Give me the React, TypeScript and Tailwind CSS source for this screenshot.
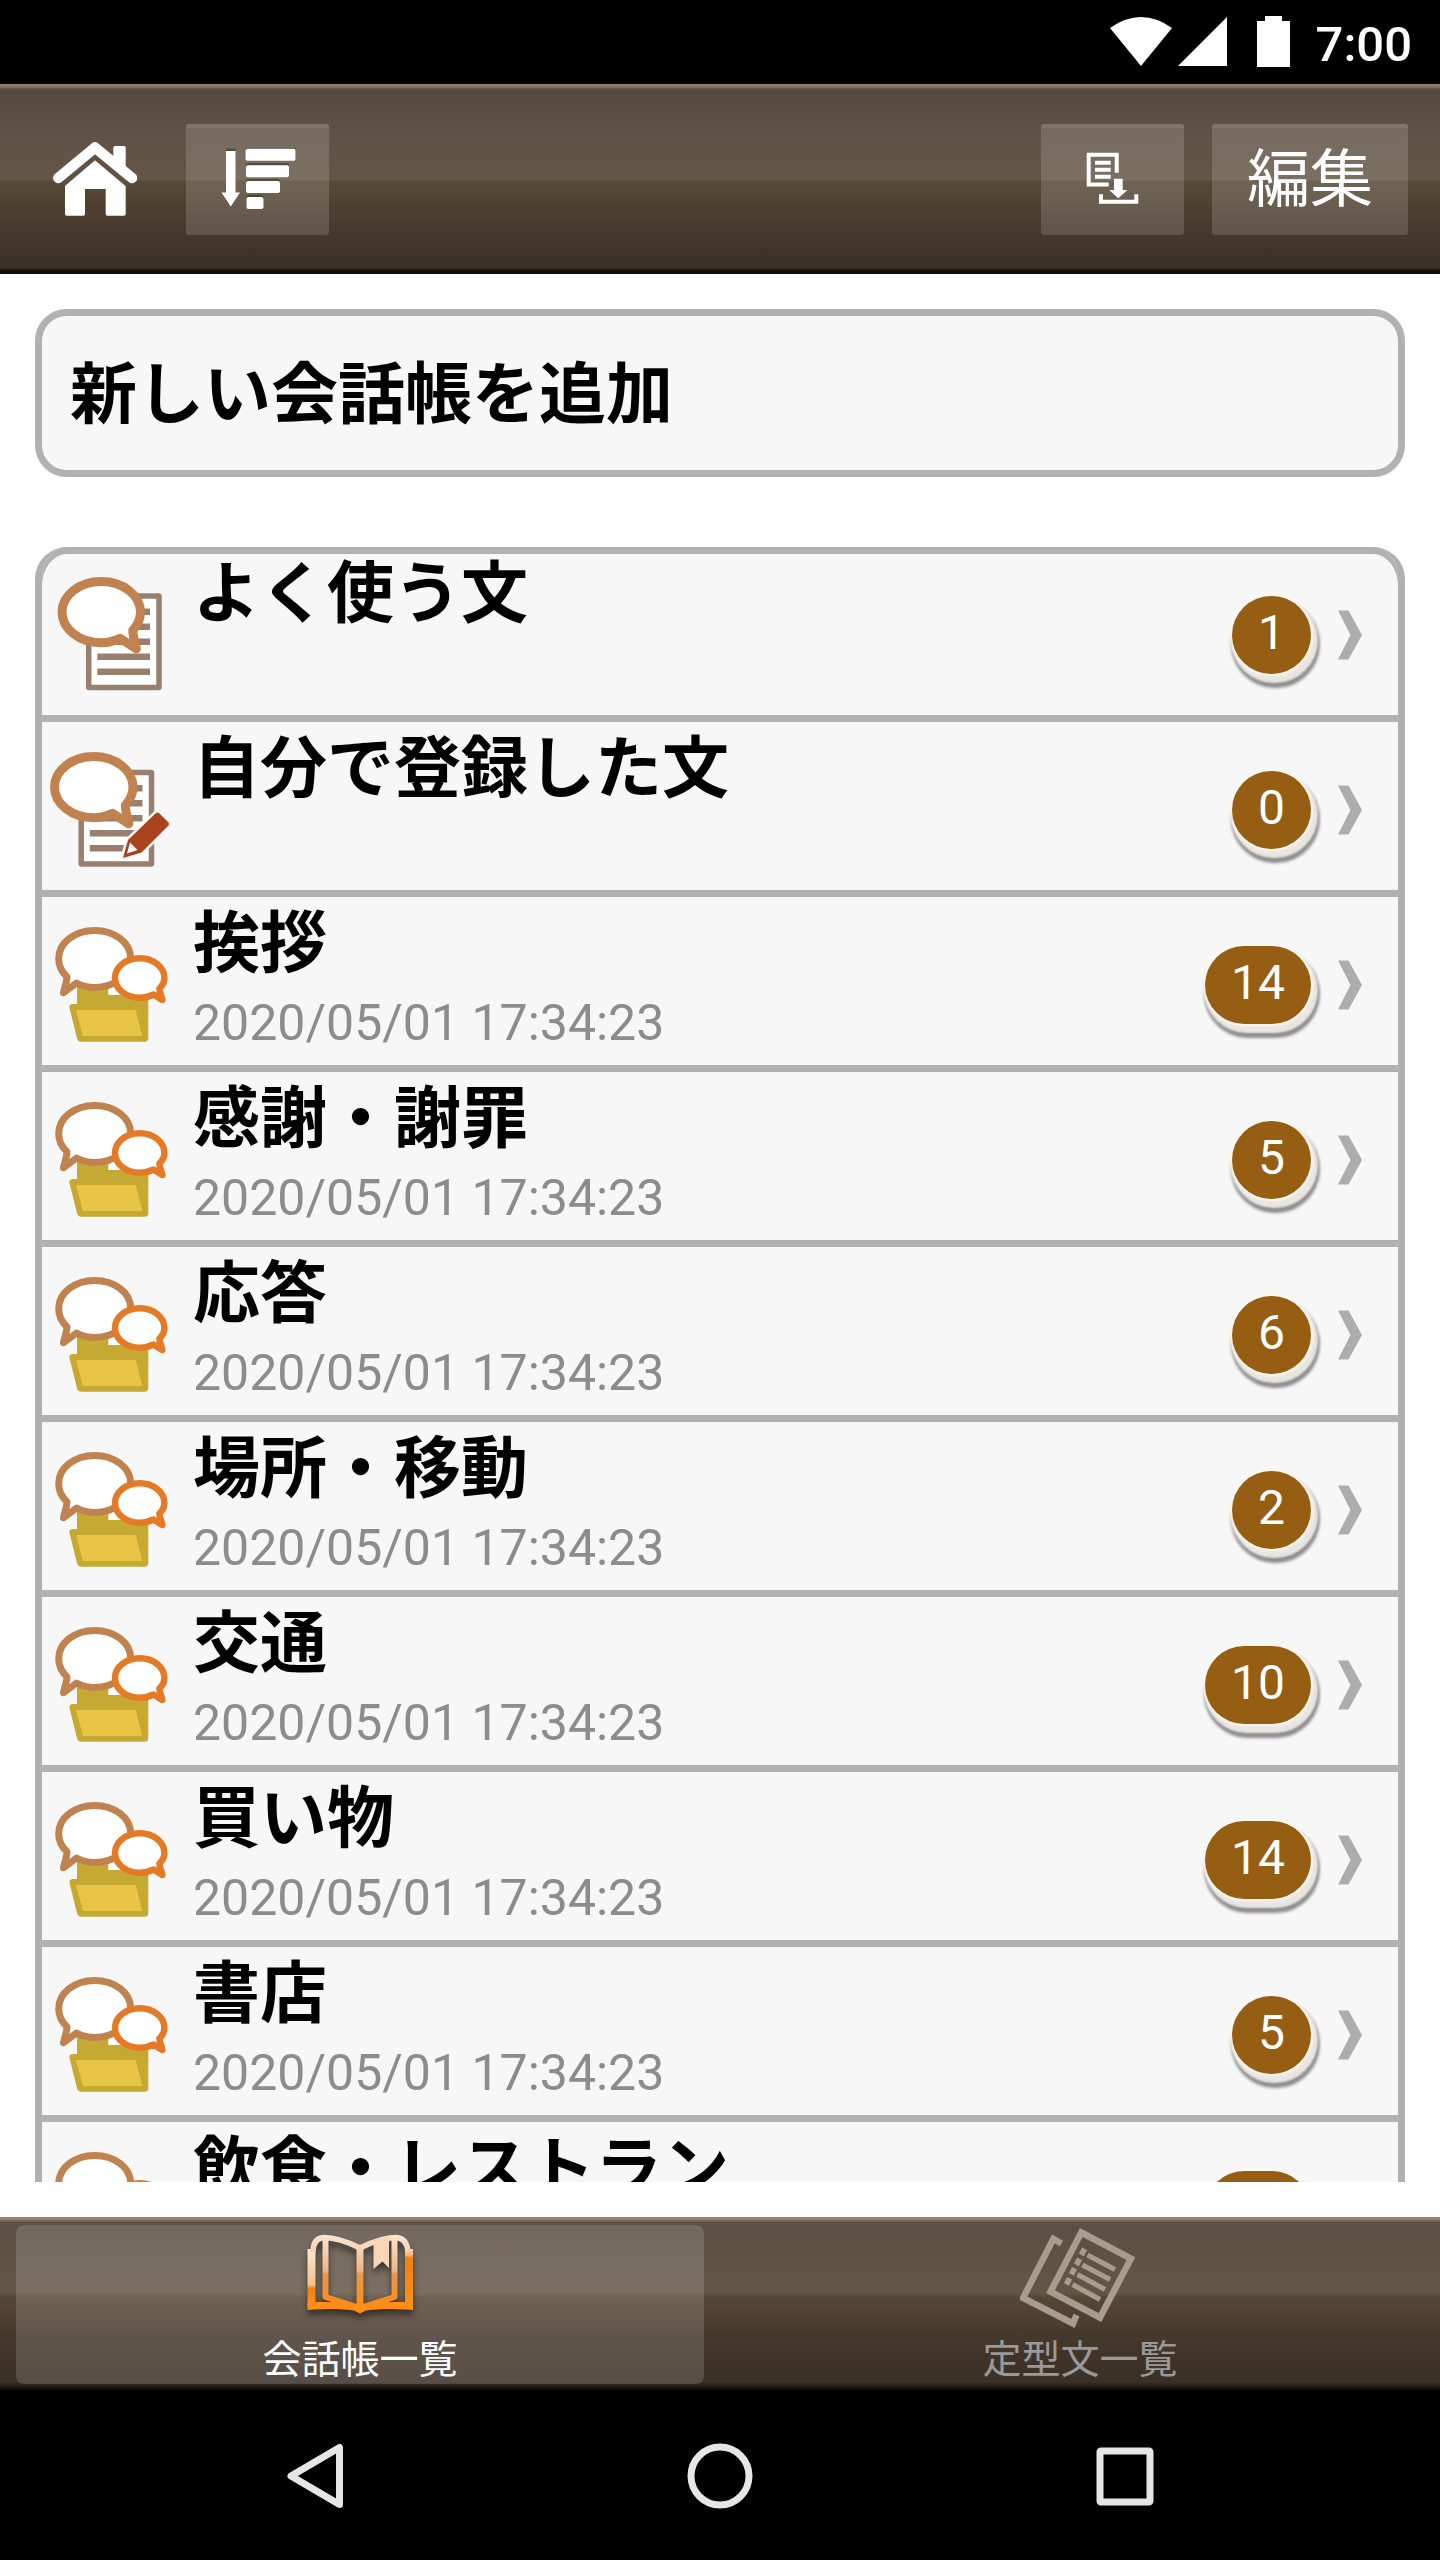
import type { ReactNode } from "react";

type NoteKind = "frequent" | "own" | "folder";

type Note = {
  title: string;
  date?: string;
  count: number;
  kind: NoteKind;
};

const notes: Note[] = [
  { title: "よく使う文", count: 1, kind: "frequent" },
  { title: "自分で登録した文", count: 0, kind: "own" },
  { title: "挨拶", date: "2020/05/01 17:34:23", count: 14, kind: "folder" },
  { title: "感謝・謝罪", date: "2020/05/01 17:34:23", count: 5, kind: "folder" },
  { title: "応答", date: "2020/05/01 17:34:23", count: 6, kind: "folder" },
  { title: "場所・移動", date: "2020/05/01 17:34:23", count: 2, kind: "folder" },
  { title: "交通", date: "2020/05/01 17:34:23", count: 10, kind: "folder" },
  { title: "買い物", date: "2020/05/01 17:34:23", count: 14, kind: "folder" },
  { title: "書店", date: "2020/05/01 17:34:23", count: 5, kind: "folder" },
  { title: "飲食・レストラン", date: "2020/05/01 17:34:23", count: 10, kind: "folder" },
];

const HomeIcon = () => (
  <svg width="84" height="74" viewBox="0 0 84 74" fill="#fff" aria-hidden="true">
    <path d="M60.300 5.500q0-1.500 1.500-1.500h9.400q1.500 0 1.500 1.500V31L60.300 20z" />
    <path d="M5.300 36 42 5.500 79 36" fill="none" stroke="#fff" strokeWidth="10.500" strokeLinecap="round" strokeLinejoin="round" />
    <path d="M12 43 42 18l30.700 25v29q0 1.700-1.700 1.700H54.400q-1.700 0-1.700-1.700V47H32v25q0 1.700-1.700 1.700H13.700Q12 73.700 12 72z" />
    <path d="M10 43.500 42 16 74.500 43.500" fill="none" stroke="#605145" strokeWidth="3.500" />
  </svg>
);

const SortIcon = () => (
  <svg width="76" height="62" viewBox="0 0 76 62" fill="#fff" aria-hidden="true">
    <g fill="#000" opacity="0.3">
      <rect x="6" y="0.500" width="9.500" height="10" rx="1" />
      <rect x="25.500" y="-1" width="50" height="12" rx="2" />
      <rect x="26" y="15" width="43" height="12" rx="2" />
      <rect x="26" y="31" width="34" height="12" rx="2" />
      <rect x="26.500" y="47" width="17" height="12" rx="2" />
    </g>
    <path d="M6 3h9.500v41.500H20L10.800 58.500 1.500 44.500H6z" />
    <rect x="25.500" y="0.800" width="50" height="12" rx="2" />
    <rect x="26" y="17.200" width="43" height="12" rx="2" />
    <rect x="26" y="33" width="34" height="12" rx="2" />
    <rect x="26.500" y="49" width="17" height="12" rx="2" />
  </svg>
);

const ImportIcon = () => (
  <svg width="54" height="54" viewBox="0 0 54 54" fill="none" stroke="#fff" strokeWidth="4" aria-hidden="true">
    <path d="M22.700 32.500H2.700V2.700h28v18" />
    <path d="M9 10.700h15.700M9 17.700h15.700M9 24.700h15.700" />
    <path d="M15 42.300v7.500h35.300v-7.500" />
    <path d="M28 26.700h8.700V38h4.800l-9.200 8.300L23.200 38H28z" fill="#fff" stroke="none" />
  </svg>
);

const Paper = () => (
  <g fill="#fff" stroke="#97806f">
    <rect x="38.700" y="24" width="70.300" height="91.500" rx="0.500" strokeWidth="5.500" />
    <path d="M47.300 39.700H100M47.300 54.700H100M47.300 69.700H100M47.300 84.700H100M47.300 99.700H100" strokeWidth="6.500" />
  </g>
);

const PaperBubble = () => (
  <path
    d="M70 66.300C64 69 58 70.800 51.300 70.800 29.600 70.800 12 57 12 40.100S29.600 9.600 51.300 9.600 90.500 23.200 90.500 40.100c0 7.400-3 13-7.700 18.400 0 6 3 14 3.600 18.400z"
    fill="#fff"
    stroke="#c0834f"
    strokeWidth="9"
    strokeLinejoin="round"
  />
);

const FrequentIcon = () => (
  <svg width="120" height="120" viewBox="0 0 120 120" className="shrink-0" aria-hidden="true">
    <Paper />
    <PaperBubble />
  </svg>
);

const OwnIcon = () => (
  <svg width="120" height="120" viewBox="0 0 120 120" className="shrink-0" aria-hidden="true">
    <g transform="translate(-7.500 1.500)">
      <Paper />
    </g>
    <g transform="translate(-7.500 0)">
      <PaperBubble />
    </g>
    <path d="M73 111 78 93l28-27q1.500-1 3 0l9.500 9.500q1 1.500 0 3L91.500 105.500z" fill="#a8431d" stroke="#f7f7f7" strokeWidth="5" strokeLinejoin="round" />
    <path d="M73 111 78 93l28-27q1.500-1 3 0l9.500 9.500q1 1.500 0 3L91.500 105.500z" fill="#a8431d" />
    <path d="M80 95.500 87.500 103 77 106.500z" fill="#fff" />
  </svg>
);

const FolderIcon = () => (
  <svg width="120" height="120" viewBox="0 0 120 120" className="shrink-0" aria-hidden="true">
    <path d="M50 58h34v16H50z" fill="#fff" />
    <path
      d="M27 62h31.300v11h40v43q0 3.700-3.700 3.700H31.500q-3.500 0-4.500-3.500L19.500 86q-.8-3.500 3-4H27z"
      fill="#c6a933"
    />
    <path d="M26 88h58.500q1.200 0 1.500 1.200L92.300 114H33z" fill="#e9c546" />
    <path
      d="M26.500 61c5.500 3 11.700 4.400 18.200 4.400 20 0 36-12.800 36-28.700S64.700 8.400 44.700 8.400s-36 12.400-36 28.300c0 7 3.200 13.300 8.300 18 0 6-2.600 10.300-3.500 16z"
      fill="#fff"
      stroke="#c0834f"
      strokeWidth="7"
      strokeLinejoin="round"
    />
    <path
      d="M103.500 72.500c-4 2-8.600 3.200-13.800 3.200-13.700 0-24.700-8.800-24.700-19.700s11-19.700 24.700-19.700 24.700 8.800 24.700 19.700c0 4-1.800 7.500-5 10.500 0 4 2.400 7.200 2.900 11.500z"
      fill="#fff"
      stroke="#e57a26"
      strokeWidth="6.500"
      strokeLinejoin="round"
    />
  </svg>
);

const BookIcon = () => (
  <svg width="120" height="108" viewBox="0 0 120 108" fill="none" aria-hidden="true">
    <defs>
      <linearGradient id="leftCover" gradientUnits="userSpaceOnUse" x1="0" y1="20" x2="0" y2="82">
        <stop offset="0" stopColor="#fdebdb" />
        <stop offset="0.600" stopColor="#f3bd8a" />
        <stop offset="0.650" stopColor="#f08010" />
        <stop offset="1" stopColor="#ff9120" />
      </linearGradient>
      <linearGradient id="rightCover" gradientUnits="userSpaceOnUse" x1="0" y1="20" x2="0" y2="82">
        <stop offset="0" stopColor="#fbdcc0" />
        <stop offset="0.120" stopColor="#f3b27a" />
        <stop offset="0.160" stopColor="#f08010" />
        <stop offset="1" stopColor="#ff9120" />
      </linearGradient>
      <linearGradient id="pages" gradientUnits="userSpaceOnUse" x1="0" y1="8" x2="0" y2="80">
        <stop offset="0" stopColor="#fbe4d0" />
        <stop offset="0.480" stopColor="#eeb588" />
        <stop offset="0.540" stopColor="#e8964a" />
        <stop offset="1" stopColor="#ff8c14" />
      </linearGradient>
    </defs>
    <g className="drop-shadow-[0_5px_3px_rgba(0,0,0,0.5)]">
      <path d="M11.500 21v57" stroke="url(#leftCover)" strokeWidth="8" />
      <path d="M109 21v57" stroke="url(#rightCover)" strokeWidth="8" />
      <path d="M7.500 74.500c20-1 36-.5 52.500 2 16-2.500 32-3 53-2V82c-18-1.500-34-1.500-47 .5l-6 3-6-3c-13-2-28-2-46.500-.5z" fill="#ff8d16" />
      <path d="M13 24q0-14 11-14.500C35 9.500 48 14 60 20c12-6 24-10.500 36-10.500q11 .5 12 14.500" stroke="url(#pages)" strokeWidth="5.500" />
      <path d="M25.500 10v59L60 80 94.500 69V10" stroke="url(#pages)" strokeWidth="6" strokeLinejoin="round" />
      <rect x="56.500" y="18" width="7" height="62" fill="url(#pages)" />
      <path d="M73.500 12 89 8v32l-6.500-6.500L73.500 41z" fill="#f8d5b5" />
    </g>
  </svg>
);

const PapersIcon = () => (
  <svg width="120" height="108" viewBox="0 0 120 108" fill="none" stroke="#a99b8d" strokeWidth="6.500" aria-hidden="true">
    <path d="M41.500 15.500 33.300 11 3 70l50 25.500 3.500-8.500" />
    <path d="M61.300 4.500 111 30.500 80 89.500 30.500 63.700z" />
    <path d="M67.500 27 95 41.500M62.500 37 90 51.500M57.500 46.500 85 61.500M52.500 56.500 80 71.500" strokeWidth="5" />
    <path d="M60.500 22.500l5 2.600M55.500 32.500l5 2.600M50.500 42l5 2.600M45.500 52l5 2.600" strokeWidth="7" />
  </svg>
);

const noteIcons: Record<NoteKind, ReactNode> = {
  frequent: <FrequentIcon />,
  own: <OwnIcon />,
  folder: <FolderIcon />,
};

const CountBadge = ({ count }: { count: number }) => (
  <span className="mt-1.5 flex h-[78px] min-w-[78px] items-center justify-center rounded-full bg-[#965e12] px-[26px] pb-1 text-[48px] leading-none text-white shadow-[0_0_3px_2px_#fdf8f2,3px_5px_2px_4px_#e9e5e0,4px_9px_3px_5px_#8e8e8e]">
    {count}
  </span>
);

const NoteRow = ({ note }: { note: Note }) => (
  <li className="border-b-[7px] border-[#b1b1b1]">
    <a href="#note" className="flex h-[168px] items-center pt-px pr-9 pl-2">
      {noteIcons[note.kind]}
      <span className="flex h-full min-w-0 flex-1 flex-col pl-[23px]">
        <span className="text-[67px] leading-[92px] font-bold whitespace-nowrap text-black">{note.title}</span>
        {note.date && <span className="text-[50px] leading-[66px] text-[#8c8c8c]">{note.date}</span>}
      </span>
      <CountBadge count={note.count} />
      <svg width="24" height="50" viewBox="0 0 24 50" className="mt-1.5 ml-[27px] shrink-0" aria-hidden="true">
        <path d="M0 0.500h10.500L24 25 10.500 49.500H0L12.500 25z" fill="#adadad" />
      </svg>
    </a>
  </li>
);

const barButton =
  "flex h-[111px] items-center justify-center rounded-[3px] bg-white/15 shadow-[inset_0_4px_1px_rgba(255,255,255,0.08)]";

const App = () => {
  return (
    <div className="flex h-screen flex-col bg-white font-['Roboto','Noto_Sans_CJK_JP',sans-serif]">
      {/* ステータスバー */}
      <div className="flex h-[84px] shrink-0 items-center justify-end bg-black pt-1 pr-7 text-white">
        <svg width="180" height="52" viewBox="0 0 180 52" fill="#fff" className="mr-[26px] mb-1" aria-hidden="true">
          <path d="M0 12Q31-10 62 12L31 50z" />
          <path d="M117 1v49H68z" />
          <path d="M155 0h17v5h8v46h-33V5h8z" />
        </svg>
        <span className="text-[49px] leading-none font-medium">7:00</span>
      </div>

      {/* ヘッダー */}
      <header className="flex h-[190px] shrink-0 items-center bg-[linear-gradient(#8f7e65_0,#877660_3px,#5a4e44_5px,#554a42_8px,#605246_50px,#635645_96px,#574838_97px,#544633_108px,#483a2e_140px,#3a3028_184px,#17110d_186px,#0d0906_190px)] pr-8 pl-[53px]">
        <button type="button" aria-label="ホーム" className="mr-[49px]">
          <HomeIcon />
        </button>
        <button type="button" aria-label="並べ替え" className={`${barButton} w-[143px]`}>
          <SortIcon />
        </button>
        <div className="ml-auto flex gap-7">
          <button type="button" aria-label="取り込み" className={`${barButton} w-[143px]`}>
            <ImportIcon />
          </button>
          <button type="button" className={`${barButton} w-[196px] pt-0.5 text-[63px] text-white`}>
            編集
          </button>
        </div>
      </header>

      {/* 会話帳リスト */}
      <main className="flex min-h-0 flex-1 flex-col gap-[70px] p-[35px]">
        <button
          type="button"
          className="h-[168px] shrink-0 rounded-[32px] border-[7px] border-[#b1b1b1] bg-[#f7f7f7] px-7 pt-1 text-left text-[67px] leading-none font-bold text-black"
        >
          新しい会話帳を追加
        </button>
        <div className="min-h-0 flex-1 overflow-y-auto [scrollbar-width:none]">
          <ul className="rounded-t-[32px] border-x-[7px] border-[#b1b1b1] bg-[#f7f7f7] shadow-[inset_0_7px_0_#b1b1b1]">
            {notes.map((note) => (
              <NoteRow key={note.title} note={note} />
            ))}
          </ul>
        </div>
      </main>

      {/* 下部タブ */}
      <nav className="grid h-[175px] shrink-0 grid-cols-2 bg-[linear-gradient(#978770_0,#8d7c64_3px,#5d5044_5px,#5b4e44_10px,#605345_40px,#635645_76px,#574736_80px,#45382c_120px,#3a3027_165px,#0d0a08_173px,#000_175px)] text-[39px] text-white">
        <a href="#notes" className="mx-4 my-2 flex flex-col items-center rounded-lg bg-white/15 pt-[3px]">
          <BookIcon />
          <span className="leading-[48px]">会話帳一覧</span>
        </a>
        <a href="#phrases" className="mx-4 my-2 flex flex-col items-center pt-[3px] text-[#999]">
          <PapersIcon />
          <span className="leading-[48px]">定型文一覧</span>
        </a>
      </nav>

      {/* ナビゲーションバー */}
      <div className="grid h-[168px] shrink-0 grid-cols-3 place-items-center bg-black px-28">
        <button type="button" aria-label="戻る">
          <svg width="72" height="72" viewBox="0 0 72 72" fill="none" stroke="#e6e6e6" strokeWidth="7" strokeLinejoin="round">
            <path d="M60.500 7.500v57L12 36z" />
          </svg>
        </button>
        <button type="button" aria-label="ホーム画面">
          <svg width="72" height="72" viewBox="0 0 72 72" fill="none" stroke="#e6e6e6" strokeWidth="7">
            <circle cx="36" cy="36" r="29" />
          </svg>
        </button>
        <button type="button" aria-label="最近使ったアプリ">
          <svg width="72" height="72" viewBox="0 0 72 72" fill="none" stroke="#e6e6e6" strokeWidth="7">
            <rect x="11" y="11" width="50" height="51" rx="1" />
          </svg>
        </button>
      </div>
    </div>
  );
};

export default App;
